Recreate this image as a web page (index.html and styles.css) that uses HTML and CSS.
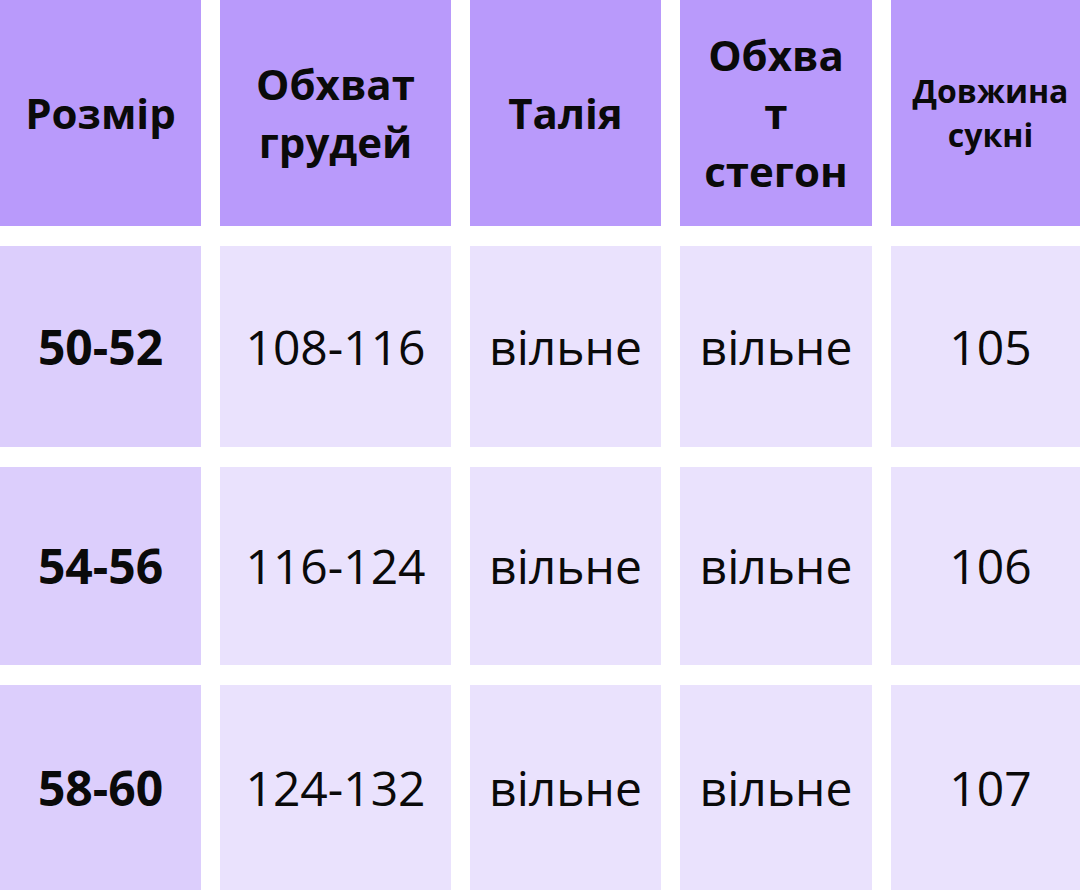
FILE: index.html
```html
<!DOCTYPE html>
<html lang="uk">
<head>
<meta charset="utf-8">
<title>Розмірна сітка</title>
<link rel="stylesheet" href="styles.css">
</head>
<body>
<div class="table">
  <div class="cell head">Розмір</div>
  <div class="cell head">Обхват<br>грудей</div>
  <div class="cell head">Талія</div>
  <div class="cell head">Обхва<br>т<br>стегон</div>
  <div class="cell head small">Довжина<br>сукні</div>

  <div class="cell size">50-52</div>
  <div class="cell">108-116</div>
  <div class="cell">вільне</div>
  <div class="cell">вільне</div>
  <div class="cell">105</div>

  <div class="cell size">54-56</div>
  <div class="cell">116-124</div>
  <div class="cell">вільне</div>
  <div class="cell">вільне</div>
  <div class="cell">106</div>

  <div class="cell size">58-60</div>
  <div class="cell">124-132</div>
  <div class="cell">вільне</div>
  <div class="cell">вільне</div>
  <div class="cell">107</div>
</div>
</body>
</html>
```

FILE: styles.css
```css
html, body {
  margin: 0;
  padding: 0;
  background: #ffffff;
}
body {
  width: 1080px;
  height: 890px;
  overflow: hidden;
  font-family: "Open Sans", "Noto Sans", sans-serif;
  color: #0a0a0a;
}
.table {
  display: grid;
  width: 1100px;
  grid-template-columns: 201px 231px 191px 192px 199px;
  grid-template-rows: 226px 201px 198px 205px;
  column-gap: 19px;
  row-gap: 20px;
}
.cell {
  display: flex;
  align-items: center;
  justify-content: center;
  text-align: center;
  background: #eae2fd;
  font-size: 48px;
  font-weight: 400;
  line-height: 1.2;
}
.cell.head {
  background: #b99afb;
  font-size: 42px;
  font-weight: 700;
  line-height: 58px;
}
.cell.head.small {
  font-size: 32px;
  line-height: 44px;
}
.cell.size {
  background: #dccefc;
  font-weight: 700;
}
```
